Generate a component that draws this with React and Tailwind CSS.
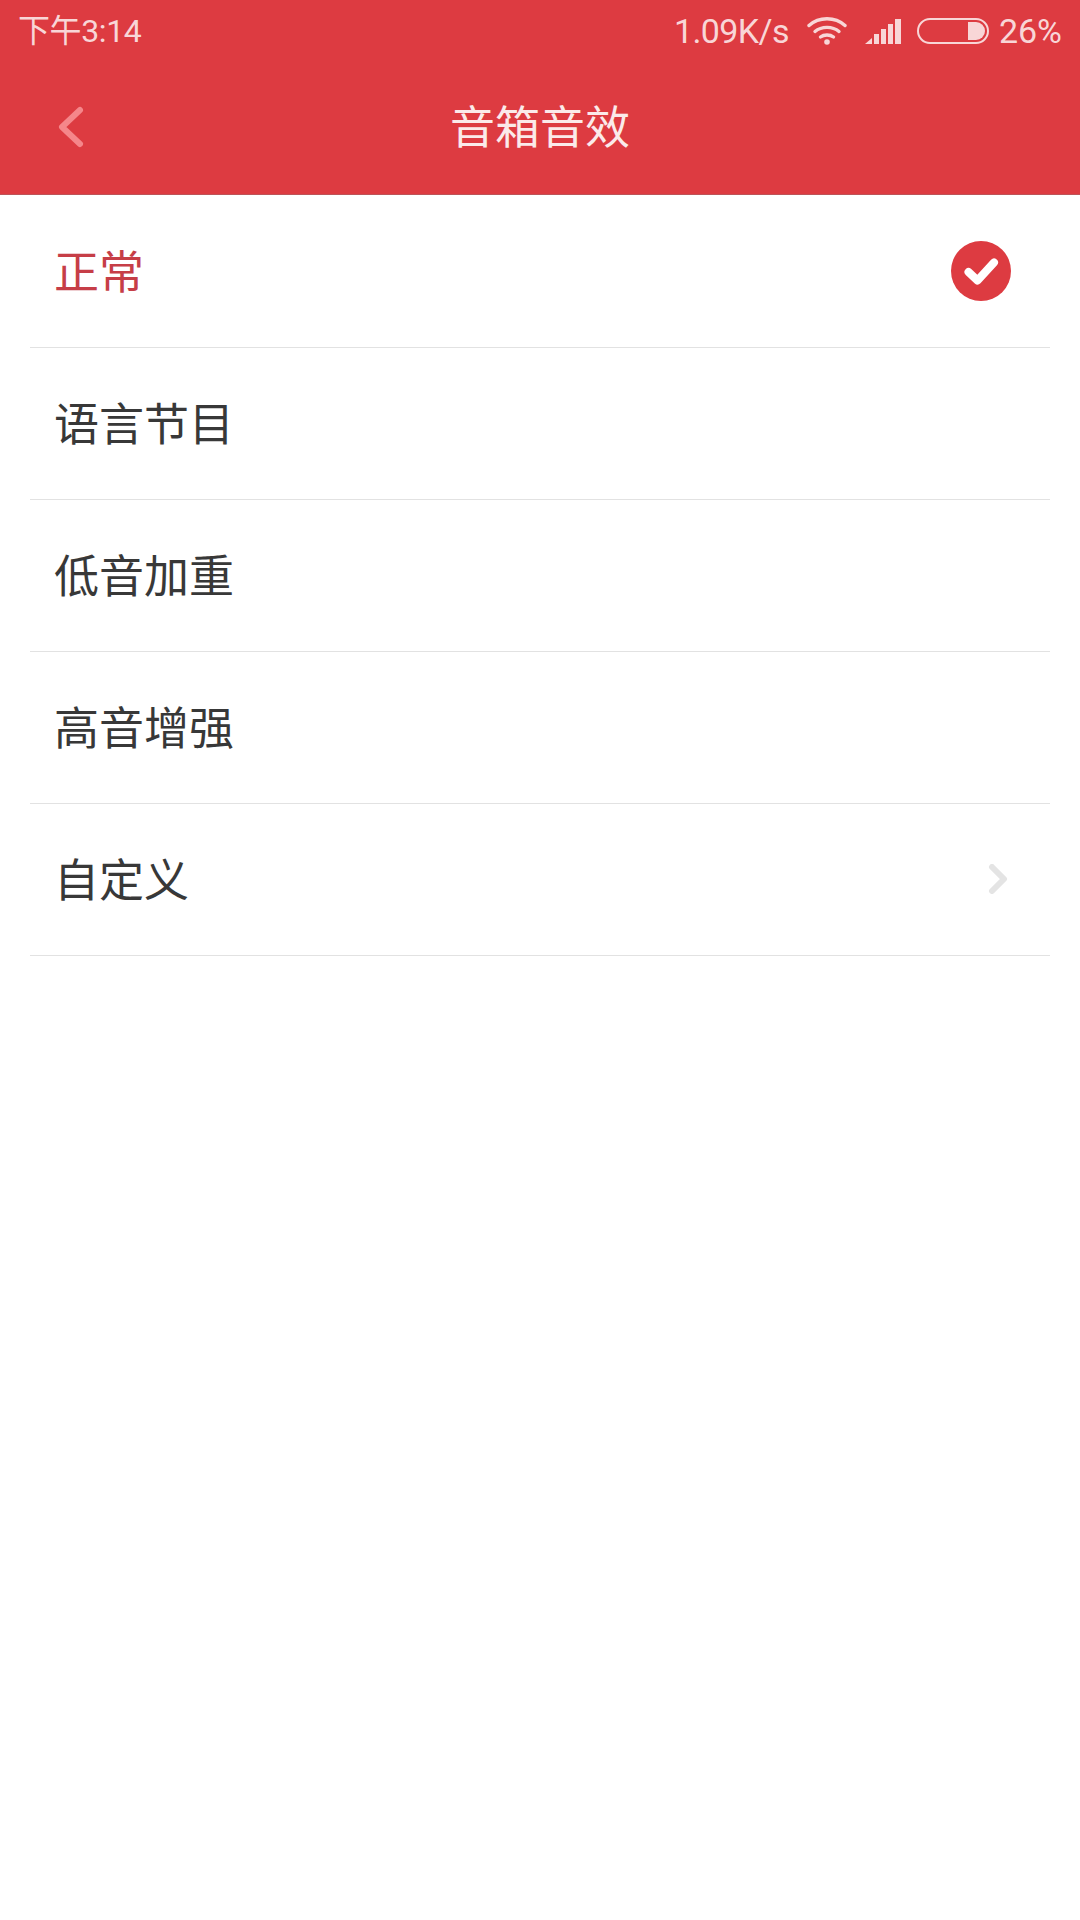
const CJK = "font-['Roboto','Noto_Sans_CJK_SC',sans-serif]";

function Row({ label, active, right }) {
  return (
    <div className="h-[152px] mx-[30px] pl-[24px] pr-[38px] flex items-center justify-between border-b-[1px] border-[#e2e2e2]">
      <span className={`text-[45px] leading-none pt-[4px] ${active ? "text-[#c63e47]" : "text-[#383838]"}`}>{label}</span>
      {right}
    </div>
  );
}

export default function App() {
  return (
    <div className={`w-[1080px] h-[1920px] bg-white ${CJK}`}>
      <header className="h-[195px] bg-[#dd3b41] border-b-[1px] border-[#bd5458] flex flex-col">
        <div className="h-[62px] px-[18px] flex items-center justify-between text-[#f8d6d7] text-[34px] leading-none">
          <span className="text-[32px] tracking-[-0.4px]">下午3:14</span>
          <div className="flex items-center">
            <span className="tracking-[-0.6px]">1.09K/s</span>
            <svg width="40" height="28" viewBox="0 0 40 28" className="ml-[18px]" fill="none" stroke="#f8d6d7" strokeWidth="3.4" strokeLinecap="round">
              <path d="M2 8.5C12 -0.5 28 -0.5 38 8.5" />
              <path d="M8 14.5C14.500 9 25.500 9 32 14.500" />
              <path d="M13.500 20C17 17.300 23 17.300 26.500 20" />
              <circle cx="20" cy="25" r="2.800" fill="#f8d6d7" stroke="none" />
            </svg>
            <svg width="38" height="28" viewBox="0 0 38 28" className="ml-[18px]" fill="#f8d6d7">
              <path d="M0 27L7 21V27Z" />
              <rect x="9" y="17" width="5" height="10" />
              <rect x="16" y="12" width="5" height="15" />
              <rect x="23" y="7" width="5" height="20" />
              <rect x="30" y="2" width="6" height="25" />
            </svg>
            <svg width="72" height="26" viewBox="0 0 72 26" className="ml-[14px]" fill="none">
              <rect x="1" y="1" width="70" height="24" rx="12" stroke="#f8d6d7" strokeWidth="2" />
              <path d="M51 4H59A9 9 0 0 1 59 22H51Z" fill="#f8d6d7" />
            </svg>
            <span className="ml-[10px]">26%</span>
          </div>
        </div>
        <div className="relative flex-1 flex items-center justify-center">
          <svg width="30" height="46" viewBox="0 0 30 46" className="absolute left-[56px] top-[42px]" fill="none" stroke="#f5868a" strokeWidth="6" strokeLinecap="round" strokeLinejoin="round">
            <path d="M24 6L6 23L24 40" />
          </svg>
          <h1 className="text-[45px] leading-none font-normal text-[#fbeaea]">音箱音效</h1>
        </div>
      </header>
      <div className="pt-[1px]">
        <Row
          label="正常"
          active
          right={
            <svg width="60" height="60" viewBox="0 0 60 60" fill="none" className="-translate-x-px -translate-y-px">
              <circle cx="30" cy="30" r="30" fill="#dd3b41" />
              <path d="M17.500 31L26.500 39.500L43 21.500" stroke="#ffffff" strokeWidth="8" strokeLinecap="round" strokeLinejoin="round" />
            </svg>
          }
        />
        <Row label="语言节目" />
        <Row label="低音加重" />
        <Row label="高音增强" />
        <Row
          label="自定义"
          right={
            <svg width="20" height="30" viewBox="0 0 20 30" className="mr-[4px] -translate-y-px" fill="none" stroke="#e4e4e4" strokeWidth="6" strokeLinecap="round" strokeLinejoin="round">
              <path d="M4 3L16 15L4 27" />
            </svg>
          }
        />
      </div>
    </div>
  );
}
